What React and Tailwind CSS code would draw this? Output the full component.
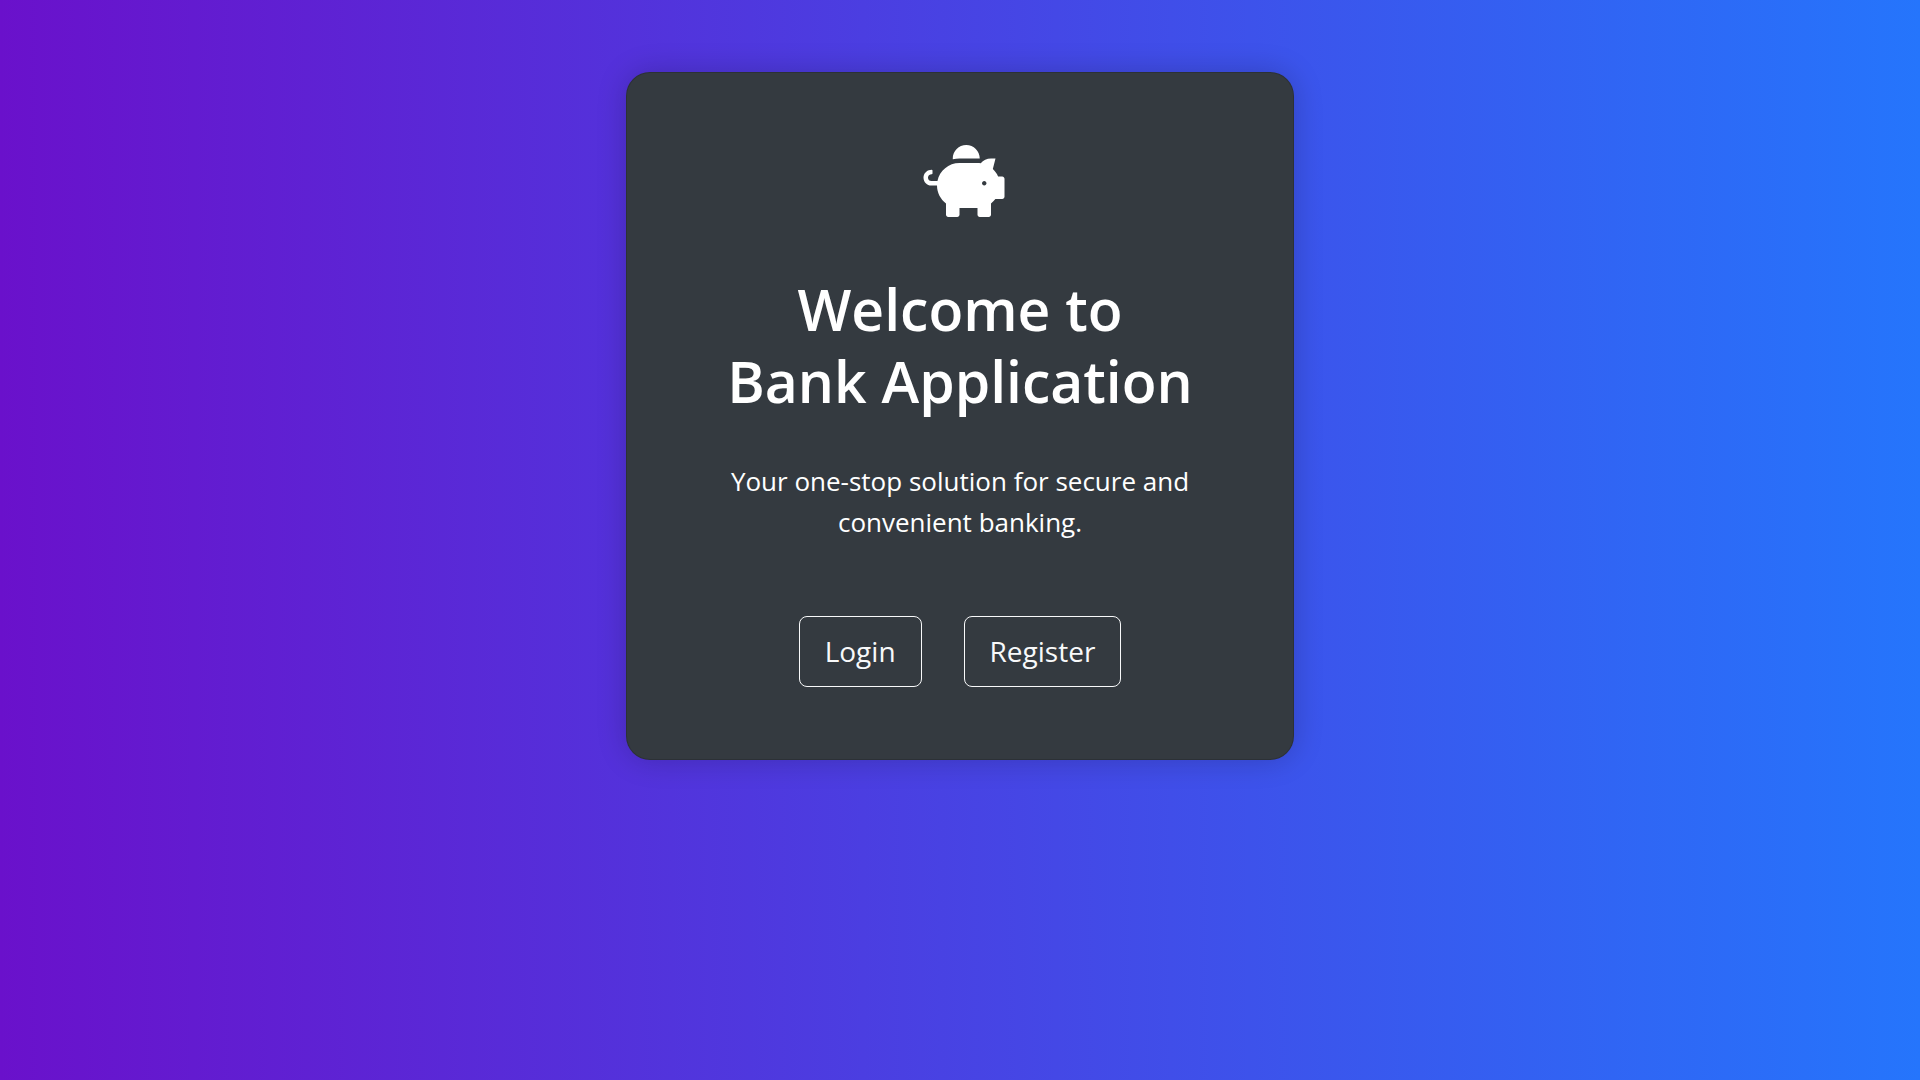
import { FaPiggyBank } from "react-icons/fa";

const buttonClass =
  "rounded-lg border border-[#f8f9fa] px-[25px] py-4 text-[28px] leading-[37px] text-[#f8f9fa]";

export default function App() {
  return (
    <div className="flex min-h-screen items-start justify-center bg-linear-to-r/srgb from-[#6a11cb] to-[#2575fc] pt-[72px] font-['Open_Sans',sans-serif]">
      <main className="w-full max-w-[668px] rounded-3xl border border-black/15 bg-[#343a40] p-[72px] text-center text-white shadow-[0_0_30px_rgba(0,0,0,0.2)]">
        <div className="flex justify-center pl-2">
          <FaPiggyBank className="h-[72px] w-[82px]" />
        </div>
        <h1 className="mt-14 text-[57px] leading-[72px] font-semibold">
          Welcome to
          <br />
          Bank Application
        </h1>
        <p className="mt-11 text-[26px] leading-[41px]">
          Your one-stop solution for secure and
          <br />
          convenient banking.
        </p>
        <div className="mt-[73px] flex justify-center gap-[42px]">
          <button type="button" className={buttonClass}>Login</button>
          <button type="button" className={buttonClass}>Register</button>
        </div>
      </main>
    </div>
  );
}
